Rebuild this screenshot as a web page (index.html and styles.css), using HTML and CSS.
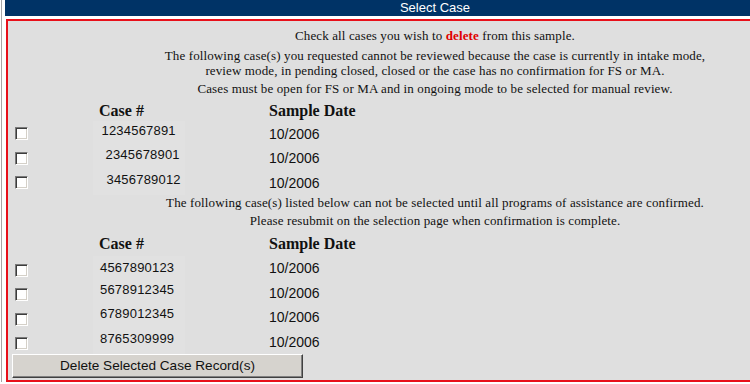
FILE: index.html
```html
<!DOCTYPE html>
<html lang="en">
<head>
  <meta charset="UTF-8">
  <title>Select Case</title>
  <link rel="stylesheet" href="styles.css">
</head>
<body>
  <div class="page">
    <div class="titlebar">Select Case</div>

    <form class="frame" onsubmit="return false;">
      <p class="note lead">Check all cases you wish to <b class="warn">delete</b> from this sample.</p>
      <p class="note wide">The following case(s) you requested cannot be reviewed because the case is currently in intake mode,<br>review mode, in pending closed, closed or the case has no confirmation for FS or MA.</p>
      <p class="note">Cases must be open for FS or MA and in ongoing mode to be selected for manual review.</p>

      <!-- cases that can be deleted -->
      <div class="cases">
        <div class="case-head"><span></span><span>Case #</span><span>Sample Date</span></div>
        <div class="case-row">
          <span class="cb"><input type="checkbox" name="case" value="1234567891"></span>
          <span class="num ind1">1234567891</span>
          <span class="date">10/2006</span>
        </div>
        <div class="case-row">
          <span class="cb"><input type="checkbox" name="case" value="2345678901"></span>
          <span class="num ind2">2345678901</span>
          <span class="date">10/2006</span>
        </div>
        <div class="case-row">
          <span class="cb"><input type="checkbox" name="case" value="3456789012"></span>
          <span class="num ind3">3456789012</span>
          <span class="date">10/2006</span>
        </div>
      </div>

      <p class="note lead">The following case(s) listed below can not be selected until all programs of assistance are confirmed.</p>
      <p class="note">Please resubmit on the selection page when confirmation is complete.</p>

      <!-- cases waiting for confirmation -->
      <div class="cases">
        <div class="case-head second"><span></span><span>Case #</span><span>Sample Date</span></div>
        <div class="case-row">
          <span class="cb low"><input type="checkbox" name="case" value="4567890123"></span>
          <span class="num down">4567890123</span>
          <span class="date">10/2006</span>
        </div>
        <div class="case-row">
          <span class="cb low"><input type="checkbox" name="case" value="5678912345"></span>
          <span class="num">5678912345</span>
          <span class="date">10/2006</span>
        </div>
        <div class="case-row">
          <span class="cb low"><input type="checkbox" name="case" value="6789012345"></span>
          <span class="num">6789012345</span>
          <span class="date">10/2006</span>
        </div>
        <div class="case-row">
          <span class="cb low"><input type="checkbox" name="case" value="8765309999"></span>
          <span class="num">8765309999</span>
          <span class="date">10/2006</span>
        </div>
      </div>

      <button type="submit" class="delete-btn">Delete Selected Case Record(s)</button>
    </form>
  </div>
</body>
</html>
```

FILE: styles.css
```css
html, body {
  overflow: hidden;
}
body {
  margin: 0;
  background: #fff;
  font-family: "Liberation Serif", "Times New Roman", serif;
  color: #111;
}
.page {
  width: 860px;
  margin-left: 1px;
  padding-left: 3px;
  border-left: 1px solid #a6a6a6;
}
.titlebar {
  height: 16px;
  line-height: 16px;
  background: #003366;
  color: #fff;
  font-family: "Liberation Sans", Arial, sans-serif;
  font-size: 13px;
  text-align: center;
}
.frame {
  box-sizing: border-box;
  width: 858px;
  margin: 3px 0 0 1px;
  padding: 7px 0 2.5px;
  border: 2px solid #e8101a;
  background: #dfdfdf;
}
.note {
  margin: 3px 0 0;
  font-size: 13px;
  letter-spacing: 0.12px;
  line-height: 15px;
  text-align: center;
}
.note.lead {
  margin-top: 0;
}
.note.wide {
  margin-top: 5px;
}
.warn {
  color: #e00000;
}
.case-head,
.case-row {
  display: grid;
  grid-template-columns: 84px 170px 1fr;
  padding-left: 7px;
}
.case-head {
  height: 20px;
  margin-top: 5px;
  font-size: 16px;
  font-weight: bold;
  line-height: 20px;
}
.case-head.second {
  height: 22px;
  margin-top: 6px;
}
.case-row {
  height: 24.5px;
  align-items: start;
  font-family: "Liberation Sans", Arial, sans-serif;
}
.cb input {
  -webkit-appearance: none;
  appearance: none;
  display: block;
  box-sizing: border-box;
  width: 13px;
  height: 13px;
  margin: 6px 0 0;
  border: 1px solid;
  border-color: #7a7a7a #fff #fff #7a7a7a;
  box-shadow: inset 1px 1px 0 #3c3c3c, inset -1px -1px 0 #d4d0c8;
  background: #fff;
}
.cb.low input {
  margin-top: 8px;
}
.num {
  align-self: stretch;
  box-sizing: border-box;
  width: 92px;
  margin-left: -6px;
  padding: 1.5px 0 0 7px;
  background: #e1e1e1;
  font-size: 13px;
  letter-spacing: 0.2px;
  line-height: 16px;
}
.num.ind1 { padding-left: 8.5px; }
.num.ind2 { padding-left: 12.5px; }
.num.ind3 { padding-left: 13.5px; }
.num.down { padding-top: 4px; }
.date {
  padding-top: 4.5px;
  font-size: 14px;
  line-height: 16px;
}
.delete-btn {
  display: block;
  box-sizing: border-box;
  width: 291px;
  height: 24px;
  margin: 0 0 0 4px;
  padding: 0;
  border: 1px solid;
  border-color: #fff #404040 #404040 #fff;
  box-shadow: inset -1px -1px 0 #808080;
  background: #d6d3ce;
  color: #111;
  font-family: "Liberation Sans", Arial, sans-serif;
  font-size: 13.6px;
}
```
